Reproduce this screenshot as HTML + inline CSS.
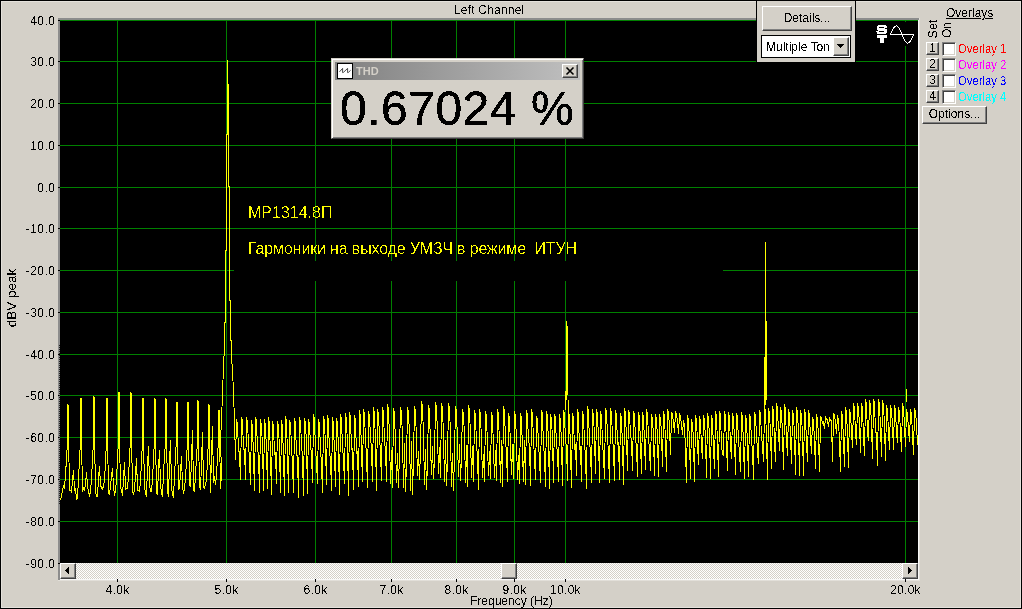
<!DOCTYPE html>
<html><head><meta charset="utf-8">
<style>
*{margin:0;padding:0;box-sizing:border-box}
html,body{width:1022px;height:609px;overflow:hidden;background:#d4d0c8}
body{position:relative;font-family:"Liberation Sans",sans-serif;font-size:12px;color:#000;will-change:transform}
.a{position:absolute}
.c{filter:url(#crisp)}
.yl{filter:url(#crisp);position:absolute;left:0;width:55.5px;text-align:right;font-size:12px;line-height:16px;letter-spacing:0.5px}
.xl{filter:url(#crisp);position:absolute;top:582px;width:81px;text-align:center;font-size:12px;line-height:16px;letter-spacing:0.3px}
.btn{position:absolute;background:#d4d0c8;border-top:1px solid #fff;border-left:1px solid #fff;border-right:1px solid #404040;border-bottom:1px solid #404040;box-shadow:inset -1px -1px 0 #808080}
.chk{position:absolute;width:14px;height:14px;background:#fff;border-top:1px solid #808080;border-left:1px solid #808080;border-right:1px solid #fff;border-bottom:1px solid #fff;box-shadow:inset 1px 1px 0 #404040,inset -1px -1px 0 #d4d0c8}
.ov{filter:url(#crisp);position:absolute;left:958px;font-size:12px;line-height:16px;transform:scaleX(0.94);transform-origin:0 0}
svg{position:absolute;left:0;top:0}
</style></head><body>
<svg width="0" height="0" style="position:absolute;left:0;top:0"><filter id="crisp" x="-50%" y="-50%" width="200%" height="200%"><feComponentTransfer><feFuncA type="linear" slope="50" intercept="-25"/></feComponentTransfer></filter><filter id="crisp2" x="-50%" y="-50%" width="200%" height="200%"><feComponentTransfer><feFuncA type="linear" slope="50" intercept="-30"/></feComponentTransfer></filter></svg>
<div class="a" style="left:0;top:0;width:1022px;height:609px;border:1px solid #000;box-shadow:inset 1px 1px 0 #e4e1db,inset -1px -1px 0 #e4e1db"></div>
<svg width="1022" height="609" shape-rendering="crispEdges">
<rect x="58" y="18" width="862" height="2" fill="#8c8c8c"/>
<rect x="58" y="18" width="2" height="563" fill="#8c8c8c"/>
<rect x="919" y="18" width="1" height="563" fill="#e2dfd9"/><rect x="58" y="580" width="862" height="1" fill="#e2dfd9"/><rect x="918" y="20" width="1" height="560" fill="#f8f8f8"/><rect x="60" y="579" width="859" height="1" fill="#f8f8f8"/>
<rect x="60" y="20" width="858" height="543" fill="#000"/>
<g stroke="#008000" stroke-width="1"><line x1="60" y1="61.5" x2="918" y2="61.5"/><line x1="60" y1="103.5" x2="918" y2="103.5"/><line x1="60" y1="145.5" x2="918" y2="145.5"/><line x1="60" y1="187.5" x2="918" y2="187.5"/><line x1="60" y1="228.5" x2="918" y2="228.5"/><line x1="60" y1="270.5" x2="918" y2="270.5"/><line x1="60" y1="312.5" x2="918" y2="312.5"/><line x1="60" y1="354.5" x2="918" y2="354.5"/><line x1="60" y1="395.5" x2="918" y2="395.5"/><line x1="60" y1="437.5" x2="918" y2="437.5"/><line x1="60" y1="479.5" x2="918" y2="479.5"/><line x1="60" y1="521.5" x2="918" y2="521.5"/><line x1="60" y1="20.5" x2="918" y2="20.5"/><line x1="117.5" y1="20" x2="117.5" y2="563"/><line x1="226.5" y1="20" x2="226.5" y2="563"/><line x1="315.5" y1="20" x2="315.5" y2="563"/><line x1="391.5" y1="20" x2="391.5" y2="563"/><line x1="456.5" y1="20" x2="456.5" y2="563"/><line x1="514.5" y1="20" x2="514.5" y2="563"/><line x1="565.5" y1="20" x2="565.5" y2="563"/><line x1="905.5" y1="20" x2="905.5" y2="563"/></g>
<rect x="234" y="261" width="489" height="20" fill="#000"/>
<rect x="874" y="22" width="42" height="24" fill="#000"/>
<g fill="#000"><rect x="58" y="20" width="2" height="1"/><rect x="58" y="61" width="2" height="1"/><rect x="58" y="103" width="2" height="1"/><rect x="58" y="145" width="2" height="1"/><rect x="58" y="187" width="2" height="1"/><rect x="58" y="228" width="2" height="1"/><rect x="58" y="270" width="2" height="1"/><rect x="58" y="312" width="2" height="1"/><rect x="58" y="354" width="2" height="1"/><rect x="58" y="395" width="2" height="1"/><rect x="58" y="437" width="2" height="1"/><rect x="58" y="479" width="2" height="1"/><rect x="58" y="521" width="2" height="1"/><rect x="58" y="563" width="2" height="1"/><rect x="117" y="579" width="1" height="3"/><rect x="226" y="579" width="1" height="3"/><rect x="315" y="579" width="1" height="3"/><rect x="391" y="579" width="1" height="3"/><rect x="456" y="579" width="1" height="3"/><rect x="514" y="579" width="1" height="3"/><rect x="565" y="579" width="1" height="3"/><rect x="905" y="579" width="1" height="3"/></g>
<line x1="59.5" y1="345" x2="59.5" y2="505" stroke="#202020" stroke-dasharray="1 1"/>
<g fill="none" stroke="#ffff00" stroke-width="1">
<polyline points="60.5,500 61.5,496 62.5,490 63.5,486 64.5,488 65.5,475 67.2,447 67.5,404 68.4,406 68.7,444 69.5,490 70.5,490 71.5,492 72.5,481 73.5,470 74.5,490 75.5,489 76.5,499 77.5,498 78.5,479 80.2,447 80.5,398 81.4,398 81.7,448 82.5,492 83.5,488 84.5,490 85.5,484 86.5,472 87.5,486 88.5,492 89.5,495 90.5,492 91.5,479 93.2,447 93.5,396 94.4,398 94.7,446 95.5,491 96.5,496 97.5,496 98.5,478 99.5,466 100.5,485 101.5,488 102.5,489 103.5,486 104.5,481 106.2,447 106.5,398 107.4,398 107.7,446 108.5,492 109.5,495 110.5,486 111.5,476 112.5,468 113.5,486 114.5,496 115.5,490 116.5,480 118.2,445 118.5,392 119.4,392 119.7,447 120.5,488 121.5,490 122.5,496 123.5,478 124.5,462 125.5,489 126.5,488 127.5,488 128.5,477 130.2,445 130.5,392 131.4,394 131.7,444 132.5,491 133.5,495 134.5,489 135.5,475 136.5,458 137.5,490 138.5,490 139.5,491 140.5,481 142.2,447 142.5,398 143.4,398 143.7,448 144.5,488 145.5,492 146.5,497 147.5,466 148.5,446 149.5,484 150.5,491 151.5,491 152.5,479 154.2,445 154.5,398 155.4,400 155.7,446 156.5,493 157.5,494 158.5,469 159.5,450 160.5,485 161.5,492 162.5,497 163.5,472 165.2,446 165.5,398 166.4,400 166.7,444 167.5,491 168.5,497 169.5,462 170.5,440 171.5,486 172.5,495 173.5,497 174.5,476 176.2,443 176.5,402 177.4,402 177.7,448 178.5,489 179.5,488 180.5,473 181.5,456 182.5,486 183.5,494 184.5,489 185.5,478 187.2,447 187.5,402 188.4,402 188.7,445 189.5,485 190.5,487 191.5,458 192.5,430 193.5,489 194.5,492 195.5,475 197.2,446 197.5,400 198.4,402 198.7,445 199.5,486 200.5,490 201.5,464 202.5,432 203.5,486 204.5,489 205.5,483 206.5,481 208.2,445 208.5,404 209.4,406 209.7,446 210.5,493 211.5,454 212.5,426 213.5,483 214.5,476 215.5,485 216.5,475 218.2,445 218.5,410 219.4,410 219.7,445 220.5,489 221.5,473 220.5,440 221.5,420 222.5,394 223.5,366 224.5,346 224.5,322 225.5,322 225.5,250 226.5,250 226.5,134 227.5,134 227.5,60 227.5,84 228.5,84 228.5,186 229.5,186 229.5,300 230.5,300 230.5,340 231.5,340 231.5,360 232.5,368 233.5,394 234.5,420 235.5,460 236.5,419 237.5,424 238.5,450 239.5,453 240.5,480 241.5,417 242.5,421 243.5,449 244.5,450 245.5,480 246.5,417 247.5,422 248.5,444 249.5,460 250.5,485 251.5,420 252.5,427 253.5,456 254.5,491 255.5,417 256.5,421 257.5,450 258.5,454 259.5,493 260.5,419 261.5,426 262.5,446 263.5,491 264.5,419 265.5,426 266.5,451 267.5,489 268.5,417 269.5,424 270.5,456 271.5,495 272.5,421 273.5,426 274.5,454 275.5,453 276.5,484 277.5,421 278.5,427 279.5,449 280.5,493 281.5,420 282.5,427 283.5,458 284.5,496 285.5,416 286.5,422 287.5,454 288.5,493 289.5,420 290.5,424 291.5,446 292.5,465 293.5,493 294.5,418 295.5,423 296.5,455 297.5,456 298.5,498 299.5,417 300.5,422 301.5,444 302.5,458 303.5,496 304.5,418 305.5,424 306.5,443 307.5,494 308.5,419 309.5,424 310.5,445 311.5,455 312.5,483 313.5,414 314.5,419 315.5,450 316.5,461 317.5,484 318.5,419 319.5,424 320.5,449 321.5,465 322.5,493 323.5,416 324.5,422 325.5,446 326.5,485 327.5,415 328.5,420 329.5,454 330.5,458 331.5,491 332.5,417 333.5,424 334.5,455 335.5,487 336.5,418 337.5,424 338.5,449 339.5,495 340.5,414 341.5,419 342.5,448 343.5,458 344.5,484 345.5,413 346.5,420 347.5,446 348.5,496 349.5,412 350.5,417 351.5,450 352.5,448 353.5,490 354.5,415 355.5,420 356.5,454 357.5,451 358.5,487 359.5,410 360.5,417 361.5,451 362.5,482 363.5,409 364.5,414 365.5,440 366.5,456 367.5,488 368.5,411 369.5,416 370.5,437 371.5,448 372.5,482 373.5,407 374.5,414 375.5,442 376.5,491 377.5,409 378.5,414 379.5,437 380.5,453 381.5,481 382.5,407 383.5,412 384.5,442 385.5,450 386.5,482 387.5,404 388.5,409 389.5,438 390.5,484 391.5,450 392.5,488 393.5,408 394.5,413 395.5,444 396.5,483 397.5,453 398.5,488 399.5,451 400.5,407 401.5,412 402.5,438 403.5,488 404.5,443 405.5,492 406.5,463 407.5,407 408.5,412 409.5,435 410.5,491 411.5,441 412.5,495 413.5,459 414.5,406 415.5,412 416.5,440 417.5,476 418.5,451 419.5,480 420.5,448 421.5,401 422.5,406 423.5,436 424.5,485 425.5,449 426.5,490 427.5,463 428.5,405 429.5,410 430.5,446 431.5,475 432.5,446 433.5,479 434.5,458 435.5,402 436.5,408 437.5,433 438.5,474 439.5,447 440.5,478 441.5,403 442.5,408 443.5,436 444.5,482 445.5,440 446.5,486 447.5,460 448.5,403 449.5,408 450.5,434 451.5,487 452.5,453 453.5,491 454.5,454 455.5,406 456.5,411 457.5,442 458.5,477 459.5,444 460.5,481 461.5,456 462.5,409 463.5,414 464.5,436 465.5,483 466.5,445 467.5,487 468.5,405 469.5,410 470.5,436 471.5,478 472.5,446 473.5,482 474.5,410 475.5,415 476.5,445 477.5,456 478.5,490 479.5,409 480.5,414 481.5,442 482.5,478 483.5,454 484.5,482 485.5,411 486.5,416 487.5,446 488.5,476 489.5,451 490.5,479 491.5,412 492.5,417 493.5,449 494.5,478 495.5,450 496.5,481 497.5,409 498.5,414 499.5,446 500.5,483 501.5,440 502.5,487 503.5,406 504.5,411 505.5,440 506.5,453 507.5,482 508.5,413 509.5,418 510.5,446 511.5,475 512.5,444 513.5,479 514.5,411 515.5,416 516.5,441 517.5,480 518.5,455 519.5,484 520.5,413 521.5,418 522.5,451 523.5,482 524.5,440 525.5,485 526.5,410 527.5,415 528.5,442 529.5,444 530.5,486 531.5,409 532.5,414 533.5,440 534.5,458 535.5,480 536.5,416 537.5,420 538.5,445 539.5,459 540.5,483 541.5,410 542.5,414 543.5,446 544.5,456 545.5,487 546.5,411 547.5,417 548.5,444 549.5,489 550.5,414 551.5,420 552.5,438 553.5,483 554.5,414 555.5,418 556.5,447 557.5,451 558.5,482 559.5,414 560.5,421 561.5,442 562.5,486 563.5,410 564.5,414 565.5,441 566.5,446 567.5,481 568.5,411 569.5,417 570.5,450 571.5,488 572.5,413 573.5,418 574.5,450 575.5,444 576.5,476 577.5,409 578.5,414 579.5,450 580.5,446 581.5,482 582.5,411 583.5,416 584.5,442 585.5,458 586.5,489 587.5,406 588.5,411 589.5,444 590.5,449 591.5,483 592.5,409 593.5,416 594.5,436 595.5,474 596.5,409 597.5,415 598.5,438 599.5,483 600.5,411 601.5,416 602.5,442 603.5,457 604.5,479 605.5,408 606.5,412 607.5,435 608.5,455 609.5,483 610.5,408 611.5,413 612.5,437 613.5,451 614.5,481 615.5,410 616.5,415 617.5,444 618.5,443 619.5,480 620.5,413 621.5,419 622.5,446 623.5,485 624.5,408 625.5,414 626.5,439 627.5,471 628.5,410 629.5,414 630.5,434 631.5,441 632.5,471 633.5,411 634.5,415 635.5,438 636.5,447 637.5,477 638.5,412 639.5,417 640.5,444 641.5,474 642.5,412 643.5,418 644.5,441 645.5,470 646.5,409 647.5,414 648.5,436 649.5,451 650.5,471 651.5,414 652.5,419 653.5,436 654.5,476 655.5,414 656.5,419 657.5,438 658.5,477 659.5,414 660.5,419 661.5,433 662.5,467 663.5,411 664.5,417 665.5,441 666.5,472 667.5,409 668.5,413 669.5,427 670.5,455 671.5,412 672.5,414 673.5,423 674.5,433 675.5,412 676.5,414 677.5,422 678.5,434 679.5,414 680.5,416 681.5,425 682.5,435 683.5,420 684.5,425 685.5,450 686.5,483 687.5,415 688.5,420 689.5,441 690.5,479 691.5,419 692.5,424 693.5,440 694.5,482 695.5,415 696.5,420 697.5,442 698.5,465 699.5,416 700.5,421 701.5,447 702.5,459 703.5,415 704.5,421 705.5,438 706.5,478 707.5,413 708.5,419 709.5,436 710.5,479 711.5,415 712.5,420 713.5,449 714.5,469 715.5,411 716.5,417 717.5,443 718.5,477 719.5,411 720.5,415 721.5,445 722.5,454 723.5,455 724.5,411 725.5,417 726.5,445 727.5,471 728.5,412 729.5,417 730.5,445 731.5,459 732.5,413 733.5,418 734.5,439 735.5,475 736.5,413 737.5,417 738.5,442 739.5,451 740.5,472 741.5,412 742.5,418 743.5,445 744.5,479 745.5,415 746.5,420 747.5,445 748.5,477 749.5,414 750.5,418 751.5,441 752.5,450 753.5,480 754.5,412 755.5,416 756.5,435 757.5,451 758.5,464 759.5,410 760.5,414 761.5,436 762.5,446 763.5,462 764.5,406 765.5,412 766.5,436 767.5,480 768.5,408 769.5,414 770.5,432 771.5,469 772.5,406 773.5,412 774.5,442 775.5,462 776.5,403 777.5,409 778.5,432 779.5,451 780.5,407 781.5,413 782.5,432 783.5,470 784.5,404 785.5,410 786.5,440 787.5,456 788.5,409 789.5,415 790.5,436 791.5,464 792.5,410 793.5,416 794.5,434 795.5,475 796.5,407 797.5,413 798.5,432 799.5,476 800.5,410 801.5,416 802.5,434 803.5,476 804.5,409 805.5,415 806.5,444 807.5,462 808.5,410 809.5,415 810.5,438 811.5,454 812.5,417 813.5,421 814.5,440 815.5,469 816.5,414 817.5,419 818.5,436 819.5,472 820.5,416 821.5,418 822.5,423 823.5,422 824.5,429 825.5,417 826.5,419 827.5,420 828.5,427 829.5,418 830.5,420 831.5,421 832.5,462 833.5,413 834.5,415 835.5,423 836.5,434 837.5,415 838.5,420 839.5,442 840.5,472 841.5,411 842.5,416 843.5,441 844.5,467 845.5,407 846.5,412 847.5,435 848.5,468 849.5,409 850.5,414 851.5,431 852.5,448 853.5,403 854.5,408 855.5,432 856.5,445 857.5,403 858.5,409 859.5,425 860.5,453 861.5,403 862.5,409 863.5,435 864.5,456 865.5,399 866.5,405 867.5,433 868.5,441 869.5,400 870.5,406 871.5,423 872.5,459 873.5,399 874.5,403 875.5,431 876.5,434 877.5,466 878.5,399 879.5,405 880.5,427 881.5,457 882.5,400 883.5,405 884.5,425 885.5,461 886.5,405 887.5,411 888.5,431 889.5,450 890.5,405 891.5,411 892.5,425 893.5,450 894.5,405 895.5,410 896.5,433 897.5,443 898.5,407 899.5,412 900.5,432 901.5,452 902.5,403 903.5,408 904.5,426 905.5,447 906.5,409 907.5,414 908.5,430 909.5,442 910.5,409 911.5,414 912.5,434 913.5,455 914.5,408 915.5,412 916.5,424 917.5,445"/>
<rect x="566" y="321" width="1" height="79" fill="#ff0" stroke="none"/><rect x="567" y="326" width="1" height="69" fill="#ff0" stroke="none"/><rect x="565" y="391" width="1" height="19" fill="#ff0" stroke="none"/><rect x="568" y="400" width="1" height="20" fill="#ff0" stroke="none"/><rect x="765" y="242" width="1" height="163" fill="#ff0" stroke="none"/><rect x="766" y="321" width="1" height="79" fill="#ff0" stroke="none"/><rect x="764" y="357" width="1" height="51" fill="#ff0" stroke="none"/><rect x="906" y="389" width="1" height="13" fill="#ff0" stroke="none"/>
</g>
</svg>
<div class="a" style="left:0;top:2px;width:1022px;text-align:center;font-size:12px;line-height:16px;padding-left:0;">&nbsp;</div>
<div class="a c" style="left:454px;top:2px;font-size:12px;line-height:16px;letter-spacing:0.2px">Left Channel</div>
<div class="yl" style="top:13px">40.0</div><div class="yl" style="top:54px">30.0</div><div class="yl" style="top:96px">20.0</div><div class="yl" style="top:138px">10.0</div><div class="yl" style="top:180px">0.0</div><div class="yl" style="top:221px">-10.0</div><div class="yl" style="top:263px">-20.0</div><div class="yl" style="top:305px">-30.0</div><div class="yl" style="top:347px">-40.0</div><div class="yl" style="top:388px">-50.0</div><div class="yl" style="top:430px">-60.0</div><div class="yl" style="top:472px">-70.0</div><div class="yl" style="top:514px">-80.0</div><div class="yl" style="top:556px">-90.0</div>
<div class="xl" style="left:77px">4.0k</div><div class="xl" style="left:186px">5.0k</div><div class="xl" style="left:275px">6.0k</div><div class="xl" style="left:351px">7.0k</div><div class="xl" style="left:416px">8.0k</div><div class="xl" style="left:474px">9.0k</div><div class="xl" style="left:525px">10.0k</div><div class="xl" style="left:865px">20.0k</div>
<div class="a c" style="left:470px;top:593px;font-size:12px;line-height:16px">Frequency (Hz)</div>
<div class="a c" style="left:-18px;top:290px;width:60px;height:16px;font-size:13.5px;line-height:16px;transform:rotate(-90deg);transform-origin:center;text-align:center;white-space:nowrap">dBV peak</div>
<div class="a" style="filter:url(#crisp2);left:248px;top:204px;color:#ff0;font-size:16px;line-height:18px">MP1314.8П</div>
<div class="a" style="filter:url(#crisp2);left:248px;top:240px;color:#ff0;font-size:16px;line-height:18px;white-space:pre;letter-spacing:-0.15px">Гармоники на выходе УМЗЧ в режиме  ИТУН</div>

<!-- scrollbar -->
<div class="a" style="left:76px;top:563px;width:826px;height:16px;background-color:#fff;background-image:linear-gradient(45deg,#d4d0c8 25%,transparent 25%,transparent 75%,#d4d0c8 75%),linear-gradient(45deg,#d4d0c8 25%,transparent 25%,transparent 75%,#d4d0c8 75%);background-size:2px 2px;background-position:0 0,1px 1px"></div>
<div class="btn" style="left:60px;top:563px;width:16px;height:16px"><svg width="14" height="14" style="left:0;top:0" shape-rendering="crispEdges"><rect x="4" y="6" width="1" height="1"/><rect x="5" y="5" width="1" height="3"/><rect x="6" y="4" width="1" height="5"/><rect x="7" y="3" width="1" height="7"/></svg></div>
<div class="btn" style="left:501px;top:563px;width:16px;height:16px"></div>
<div class="btn" style="left:902px;top:563px;width:16px;height:16px"><svg width="14" height="14" style="left:0;top:0" shape-rendering="crispEdges"><rect x="5" y="3" width="1" height="7"/><rect x="6" y="4" width="1" height="5"/><rect x="7" y="5" width="1" height="3"/><rect x="8" y="6" width="1" height="1"/></svg></div>
<!-- details panel -->
<div class="a" style="left:756px;top:1px;width:100px;height:62px;background:#d4d0c8;border-left:1px solid #000;border-right:1px solid #000;border-bottom:1px solid #000"></div>
<div class="btn" style="left:762px;top:6px;width:90px;height:25px;text-align:center;line-height:22px;font-size:12px"><span class="c" style="display:inline-block">Details...</span></div>
<div class="a" style="left:761px;top:35px;width:90px;height:23px;background:#fff;border:1px solid #000"><div class="a c" style="left:4px;top:3px;font-size:12px;line-height:16px">Multiple Ton</div></div>
<div class="btn" style="left:833px;top:37px;width:16px;height:19px"><svg width="14" height="17" style="left:0;top:0" shape-rendering="crispEdges"><rect x="3" y="6" width="7" height="1"/><rect x="4" y="7" width="5" height="1"/><rect x="5" y="8" width="3" height="1"/><rect x="6" y="9" width="1" height="1"/></svg></div>
<!-- ST icon -->
<svg width="1022" height="609" style="left:0;top:0" shape-rendering="crispEdges">
<g fill="#fff"><rect x="878" y="25" width="8" height="1"/><rect x="877" y="26" width="10" height="1"/><rect x="877" y="27" width="2" height="1"/><rect x="884" y="27" width="3" height="1"/><rect x="877" y="28" width="8" height="1"/><rect x="877" y="29" width="10" height="1"/><rect x="878" y="30" width="9" height="1"/><rect x="876" y="31" width="3" height="1"/><rect x="884" y="31" width="3" height="1"/><rect x="877" y="32" width="10" height="1"/><rect x="877" y="33" width="9" height="1"/><rect x="877" y="35" width="10" height="1"/><rect x="877" y="36" width="10" height="1"/><rect x="877" y="37" width="10" height="1"/><rect x="880" y="38" width="4" height="1"/><rect x="880" y="39" width="4" height="1"/><rect x="880" y="40" width="4" height="1"/><rect x="880" y="41" width="4" height="1"/><rect x="880" y="42" width="4" height="1"/></g>
<polyline points="890.5,34.5 891.0,33.3 891.5,32.2 892.0,31.1 892.5,30.0 893.0,29.1 893.5,28.2 894.0,27.5 894.5,26.9 895.0,26.4 895.5,26.1 896.0,25.9 896.5,25.9 897.0,26.1 897.5,26.4 898.0,26.9 898.5,27.5 899.0,28.2 899.5,29.1 900.0,30.0 900.5,31.1 901.0,32.2 901.5,33.3 902.0,34.5 902.5,35.7 903.0,36.8 903.5,37.9 904.0,39.0 904.5,39.9 905.0,40.8 905.5,41.5 906.0,42.1 906.5,42.6 907.0,42.9 907.5,43.1 908.0,43.1 908.5,42.9 909.0,42.6 909.5,42.1 910.0,41.5 910.5,40.8 911.0,39.9 911.5,39.0 912.0,37.9 912.5,36.8 913.0,35.7 913.5,34.5" fill="none" stroke="#fff" stroke-width="1"/><rect x="890" y="34" width="24" height="1" fill="#fff"/>
</svg>
<!-- overlays panel -->
<div class="a c" style="left:946px;top:5px;font-size:12px;line-height:16px;text-decoration:underline">Overlays</div>
<div class="a c" style="left:916px;top:21px;width:34px;height:16px;font-size:12.5px;line-height:16px;transform:rotate(-90deg);transform-origin:center;text-align:center">Set</div>
<div class="a c" style="left:930px;top:22px;width:34px;height:16px;font-size:12px;line-height:16px;transform:rotate(-90deg);transform-origin:center;text-align:center">On</div>
<div class="btn" style="left:926px;top:42px;width:13px;height:13px;font-size:12px;line-height:11px;text-align:center"><span class="c" style="display:inline-block">1</span></div>
<div class="chk" style="left:942px;top:42px"></div>
<div class="ov" style="top:41px;color:#ff0000">Overlay 1</div>
<div class="btn" style="left:926px;top:58px;width:13px;height:13px;font-size:12px;line-height:11px;text-align:center"><span class="c" style="display:inline-block">2</span></div>
<div class="chk" style="left:942px;top:58px"></div>
<div class="ov" style="top:57px;color:#ff00ff">Overlay 2</div>
<div class="btn" style="left:926px;top:74px;width:13px;height:13px;font-size:12px;line-height:11px;text-align:center"><span class="c" style="display:inline-block">3</span></div>
<div class="chk" style="left:942px;top:74px"></div>
<div class="ov" style="top:73px;color:#0000ff">Overlay 3</div>
<div class="btn" style="left:926px;top:90px;width:13px;height:13px;font-size:12px;line-height:11px;text-align:center"><span class="c" style="display:inline-block">4</span></div>
<div class="chk" style="left:942px;top:90px"></div>
<div class="ov" style="top:89px;color:#00ffff">Overlay 4</div>
<div class="btn" style="left:922px;top:106px;width:65px;height:18px;text-align:center;line-height:15px;font-size:12px"><span class="c" style="display:inline-block">Options...</span></div>
<!-- THD window -->
<div class="a" style="left:331px;top:58px;width:253px;height:81px;background:#d4d0c8;border-top:1px solid #d4d0c8;border-left:1px solid #d4d0c8;border-right:1px solid #404040;border-bottom:1px solid #404040;box-shadow:inset 1px 1px 0 #fff,inset -1px -1px 0 #808080">
 <div class="a" style="left:3px;top:3px;width:245px;height:18px;background:linear-gradient(90deg,#808080,#c0c0c0)"></div>
 <div class="a" style="left:5px;top:4px;width:16px;height:16px;background:#fff;border:1px solid #000"><svg width="14" height="14" style="left:0;top:0"><polyline points="1.5,7.8 4.6,4.4 4.6,8.6 5.4,8.4 9.6,4.4 9.6,8.6 10.4,8.4 12.6,6.3" fill="none" stroke="#333" stroke-width="0.9"/></svg></div>
 <div class="a" style="left:24px;top:5px;color:#d4d0c8;font-weight:bold;font-size:11px;line-height:14px">THD</div>
 <div class="btn" style="left:230px;top:5px;width:16px;height:14px"><svg width="14" height="12" style="left:0;top:0" shape-rendering="crispEdges"><path d="M3.5 2.5 L10.5 9.5 M10.5 2.5 L3.5 9.5" stroke="#000" stroke-width="1.6" shape-rendering="auto"/></svg></div>
 <div class="a c" style="left:8px;top:23px;font-size:48px;line-height:54px;white-space:pre;letter-spacing:0.5px;-webkit-text-stroke:0.4px #000">0.67024</div><div class="a c" style="left:199px;top:23px;font-size:48px;line-height:54px;-webkit-text-stroke:0.4px #000">%</div>
</div>
</body></html>
